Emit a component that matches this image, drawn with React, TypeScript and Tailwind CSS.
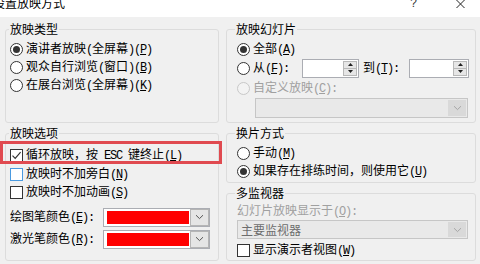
import React from "react";

const isAscii = (p: string) => /^[\x20-\x7e]+$/.test(p);

// "&P" marks a mnemonic letter, drawn underlined
function Amp({ s }: { s: string }) {
  const bits = s.split(/&(.)/);
  return <>{bits.map((b, i) => (i % 2 ? <u key={i}>{b}</u> : b))}</>;
}

function Label({ s, className = "" }: { s: string; className?: string }) {
  const parts = s.split(/([\x20-\x7e]+)/).filter(Boolean);
  return (
    <span className={`whitespace-pre ${className}`}>
      {parts.map((p, i) =>
        isAscii(p) ? (
          <span key={i} className="font-['Liberation_Mono'] text-[12px] tracking-[-1.2px]">
            <Amp s={p} />
          </span>
        ) : (
          <span key={i}>{p}</span>
        )
      )}
    </span>
  );
}

function Radio({ on = false, disabled = false }: { on?: boolean; disabled?: boolean }) {
  return (
    <span
      className={`flex h-[13px] w-[13px] shrink-0 items-center justify-center rounded-full border ${
        disabled ? "border-[#c8c8c8] bg-[#f3f3f3]" : "border-[#333333] bg-white"
      }`}
    >
      {on && <span className="h-[7px] w-[7px] rounded-full bg-[#333333]" />}
    </span>
  );
}

function Check({ on = false, focus = false }: { on?: boolean; focus?: boolean }) {
  return (
    <span
      className={`flex h-[13px] w-[13px] shrink-0 items-center justify-center border bg-white ${
        focus ? "border-[#4a9ae0]" : "border-[#333333]"
      }`}
    >
      {on && (
        <svg width="11" height="11" viewBox="0 0 11 11">
          <path d="M1.5 5.6 L4.2 8.4 L9.6 2.2" fill="none" stroke="#333" strokeWidth="1.2" />
        </svg>
      )}
    </span>
  );
}

function Chevron({ color }: { color: string }) {
  return (
    <svg width="9" height="6" viewBox="0 0 9 6">
      <path d="M1 1.2 L4.5 4.6 L8 1.2" fill="none" stroke={color} strokeWidth="1" />
    </svg>
  );
}

function Spin({ w }: { w: string }) {
  return (
    <span className={`flex h-[19px] ${w} border border-[#abadb3] bg-white`}>
      <span className="flex-1" />
      <span className="my-[1px] mr-[1px] flex w-[14px] flex-col border border-[#b8b8b8] bg-[#e6e6e6]">
        <span className="flex flex-1 items-center justify-center border-b border-[#b8b8b8]">
          <svg width="5" height="3" viewBox="0 0 5 3">
            <path d="M0 3 L2.5 0 L5 3 Z" fill="#222" />
          </svg>
        </span>
        <span className="flex flex-1 items-center justify-center">
          <svg width="5" height="3" viewBox="0 0 5 3">
            <path d="M0 0 L2.5 3 L5 0 Z" fill="#222" />
          </svg>
        </span>
      </span>
    </span>
  );
}

function Combo({ text = "", w, h }: { text?: string; w: string; h: string }) {
  return (
    <div className={`flex ${h} ${w} border border-[#c6c6c6] bg-[#e9e9e9]`}>
      <span className="flex-1 pl-[3px] leading-[17px] text-[#6d6d6d]">{text}</span>
      <span className="my-[1px] mr-[1px] flex w-[18px] items-center justify-center bg-[#d9d9d9]">
        <Chevron color="#a6a6a6" />
      </span>
    </div>
  );
}

function ColorCombo() {
  return (
    <div className="flex h-[19px] w-[107px] border border-[#abadb3] bg-white pl-[3px]">
      <span className="my-[2px] w-[82px] bg-[#ff0000]" />
      <span className="ml-[1px] flex w-[19px] items-center justify-center border border-[#b5b5b5] bg-[#e5e5e5]">
        <Chevron color="#555" />
      </span>
    </div>
  );
}

const legend = "text-[12px] leading-[16px] px-[1px]";
const box = "min-w-0 rounded-[3px] border border-[#dcdcdc]";

export default function App() {
  return (
    <div className="h-[264px] w-[480px] overflow-hidden bg-[#f0f0f0] font-['Noto_Sans_CJK_SC',sans-serif] text-[12px] leading-[18px] text-black">
      <div className="flex h-[17px] items-start bg-white">
        <span className="-ml-[7px] -mt-[5px] leading-[16px]">设置放映方式</span>
        <span className="flex-1" />
        <span className="-mt-[5px] mr-[39px] font-['Liberation_Sans'] leading-[16px] text-[#333]">?</span>
        <svg width="9" height="9" viewBox="0 0 9 9" className="mr-[15px]">
          <path d="M0.5 0 L8.5 8 M8.5 0 L0.5 8" stroke="#222" strokeWidth="1" />
        </svg>
      </div>

      <div className="grid grid-cols-[214px_250px] gap-x-[7px] pl-[5px] pt-[4px]">
        <fieldset className={`${box} h-[102px] pl-[4px] pt-[3px]`}>
          <legend className={`${legend} -ml-[1px]`}>放映类型</legend>
          <div className="flex h-[18px] items-center gap-[3px]">
            <Radio on />
            <Label s="演讲者放映(全屏幕)(&P)" />
          </div>
          <div className="flex h-[18px] items-center gap-[3px]">
            <Radio />
            <Label s="观众自行浏览(窗口)(&B)" />
          </div>
          <div className="flex h-[18px] items-center gap-[3px]">
            <Radio />
            <Label s="在展台浏览(全屏幕)(&K)" />
          </div>
        </fieldset>

        <fieldset className={`${box} h-[102px] pl-[10px] pr-[6px] pt-[3px]`}>
          <legend className={`${legend} -ml-[2px]`}>放映幻灯片</legend>
          <div className="flex h-[18px] items-center gap-[3px]">
            <Radio on />
            <Label s="全部(&A)" />
          </div>
          <div className="flex h-[20px] items-center">
            <Radio />
            <Label s="从(&F):" className="ml-[3px] w-[49px]" />
            <Spin w="w-[57px]" />
            <Label s="到(&T):" className="ml-[4px] w-[46px]" />
            <Spin w="w-[60px]" />
          </div>
          <div className="flex h-[20px] items-center gap-[3px]">
            <Radio disabled />
            <Label s="自定义放映(&C):" className="text-[#a0a0a0]" />
          </div>
          <div className="ml-[18px]">
            <Combo w="w-[213px]" h="h-[20px]" />
          </div>
        </fieldset>

        <fieldset className={`${box} mt-[2px] h-[136px] pl-[4px] pt-[5px]`}>
          <legend className={`${legend} -ml-[1px]`}>放映选项</legend>
          <div className="relative flex h-[18px] items-center gap-[3px]">
            <Check on />
            <Label s="循环放映，按 ESC 键终止(&L)" />
            <span className="absolute -left-[10px] -top-[5px] h-[23px] w-[222px] border-[3px] border-[#e04a50]" />
          </div>
          <div className="mt-[1px] flex h-[18px] items-center gap-[3px]">
            <Check focus />
            <Label s="放映时不加旁白(&N)" />
          </div>
          <div className="flex h-[18px] items-center gap-[3px]">
            <Check />
            <Label s="放映时不加动画(&S)" />
          </div>
          <div className="mt-[6px] flex h-[20px] items-center">
            <Label s="绘图笔颜色(&E):" className="w-[93px]" />
            <ColorCombo />
          </div>
          <div className="mt-[2px] flex h-[20px] items-center">
            <Label s="激光笔颜色(&R):" className="w-[93px]" />
            <ColorCombo />
          </div>
        </fieldset>

        <div className="mt-[2px] flex flex-col">
          <fieldset className={`${box} h-[58px] pl-[10px] pt-[3px]`}>
            <legend className={`${legend} -ml-[2px]`}>换片方式</legend>
            <div className="flex h-[18px] items-center gap-[3px]">
              <Radio />
              <Label s="手动(&M)" />
            </div>
            <div className="flex h-[18px] items-center gap-[3px]">
              <Radio on />
              <Label s="如果存在排练时间，则使用它(&U)" />
            </div>
          </fieldset>
          <fieldset className={`${box} mt-[2px] h-[76px] pl-[10px] pr-[6px] pt-[1px]`}>
            <legend className={`${legend} -ml-[2px]`}>多监视器</legend>
            <div className="flex h-[18px] items-center">
              <Label s="幻灯片放映显示于(&O):" className="text-[#a0a0a0]" />
            </div>
            <Combo text="主要监视器" w="w-[231px]" h="h-[19px]" />
            <div className="mt-[2px] flex h-[18px] items-center gap-[3px]">
              <Check />
              <Label s="显示演示者视图(&W)" />
            </div>
          </fieldset>
        </div>
      </div>
    </div>
  );
}
